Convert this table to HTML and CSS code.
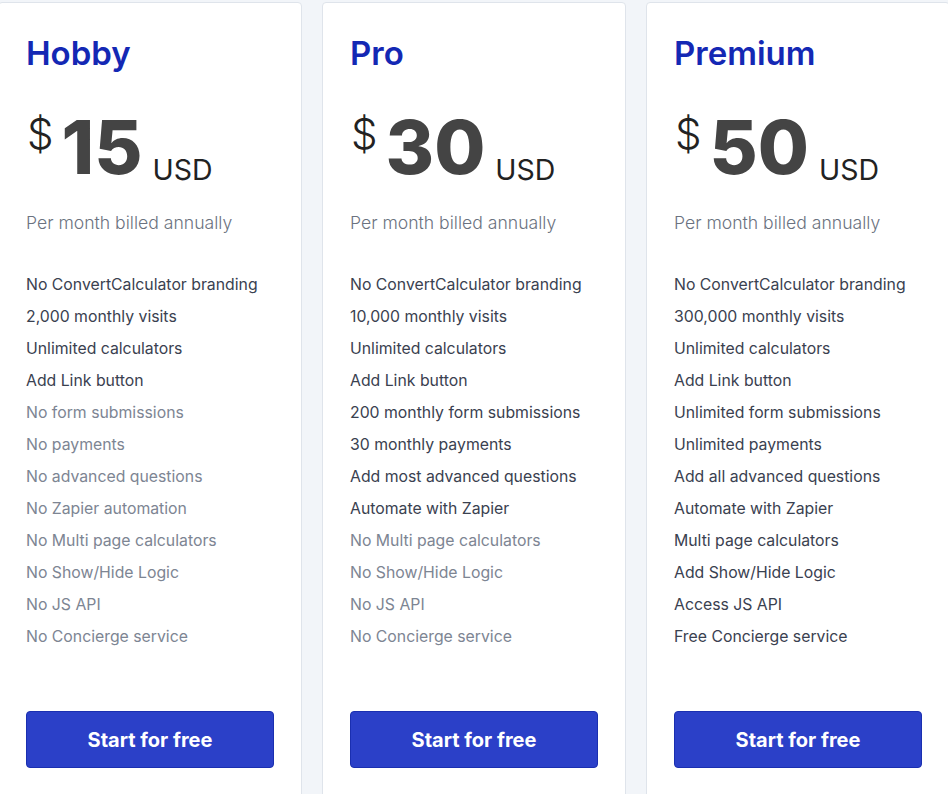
FILE: index.html
```html
<!DOCTYPE html>
<html lang="en">
<head>
    <meta charset="UTF-8">
    <meta name="viewport" content="width=device-width, initial-scale=1.0">
    <title>Pricing</title>
    <link rel="stylesheet" href="styles.css">
</head>
<body>
    <div class="plans">
        <div class="plan">
            <div class="plan-title">Hobby</div>
            <div class="price">
                <span class="currency">$</span>
                <span class="amount">15</span>
                <span class="unit">USD</span>
            </div>
            <div class="period">Per month billed annually</div>
            <ul class="features">
                <li>No ConvertCalculator branding</li>
                <li>2,000 monthly visits</li>
                <li>Unlimited calculators</li>
                <li>Add Link button</li>
                <li class="off">No form submissions</li>
                <li class="off">No payments</li>
                <li class="off">No advanced questions</li>
                <li class="off">No Zapier automation</li>
                <li class="off">No Multi page calculators</li>
                <li class="off">No Show/Hide Logic</li>
                <li class="off">No JS API</li>
                <li class="off">No Concierge service</li>
            </ul>
            <button class="start-btn">Start for free</button>
        </div>
        <div class="plan">
            <div class="plan-title">Pro</div>
            <div class="price">
                <span class="currency">$</span>
                <span class="amount">30</span>
                <span class="unit">USD</span>
            </div>
            <div class="period">Per month billed annually</div>
            <ul class="features">
                <li>No ConvertCalculator branding</li>
                <li>10,000 monthly visits</li>
                <li>Unlimited calculators</li>
                <li>Add Link button</li>
                <li>200 monthly form submissions</li>
                <li>30 monthly payments</li>
                <li>Add most advanced questions</li>
                <li>Automate with Zapier</li>
                <li class="off">No Multi page calculators</li>
                <li class="off">No Show/Hide Logic</li>
                <li class="off">No JS API</li>
                <li class="off">No Concierge service</li>
            </ul>
            <button class="start-btn">Start for free</button>
        </div>
        <div class="plan">
            <div class="plan-title">Premium</div>
            <div class="price">
                <span class="currency">$</span>
                <span class="amount">50</span>
                <span class="unit">USD</span>
            </div>
            <div class="period">Per month billed annually</div>
            <ul class="features">
                <li>No ConvertCalculator branding</li>
                <li>300,000 monthly visits</li>
                <li>Unlimited calculators</li>
                <li>Add Link button</li>
                <li>Unlimited form submissions</li>
                <li>Unlimited payments</li>
                <li>Add all advanced questions</li>
                <li>Automate with Zapier</li>
                <li>Multi page calculators</li>
                <li>Add Show/Hide Logic</li>
                <li>Access JS API</li>
                <li>Free Concierge service</li>
            </ul>
            <button class="start-btn">Start for free</button>
        </div>
    </div>
</body>
</html>
```

FILE: styles.css
```css
body {
    margin: 0;
    font-family: Inter, "Noto Sans", Arial, sans-serif;
    background: #f2f5f9;
    overflow: hidden;
}

.plans {
    display: flex;
    gap: 20px;
    margin-left: -2px;
    padding-top: 2px;
}

.plan {
    flex: 0 0 304px;
    min-width: 0;
    box-sizing: border-box;
    height: 830px;
    padding: 30px 27px 0;
    background: #fff;
    border: 1px solid #dfe4eb;
    border-radius: 4px;
}

.plan-title {
    font-size: 33px;
    line-height: 40px;
    font-weight: 600;
    color: #1428b4;
}

.price {
    display: flex;
    align-items: flex-start;
    margin-top: 38px;
    height: 74px;
}

.currency {
    font-size: 42px;
    line-height: 1;
    font-weight: 300;
    color: #222;
    margin-top: 2px;
    margin-left: 1px;
}

.amount {
    font-size: 74px;
    line-height: 1;
    font-weight: 800;
    color: #444;
    margin-left: 8px;
    margin-top: -1px;
}

.unit {
    font-size: 28.5px;
    line-height: 1;
    color: #222;
    margin-top: 45px;
    margin-left: 10px;
}

.period {
    margin-top: 24px;
    font-size: 17.6px;
    line-height: 28px;
    font-weight: 300;
    color: #6b7280;
}

.features {
    list-style: none;
    margin: 32px 0 0;
    padding: 0;
}

.features li {
    font-size: 15.8px;
    line-height: 32px;
    color: #3a4150;
}

.features li.off {
    color: #7d8593;
}

.start-btn {
    display: block;
    margin-top: 58px;
    width: 100%;
    height: 57px;
    background: #2b40c8;
    border: 1px solid #1a2fb0;
    border-radius: 4px;
    color: #fff;
    font-family: Inter, "Noto Sans", Arial, sans-serif;
    font-size: 20px;
    font-weight: 700;
    cursor: pointer;
}
```
